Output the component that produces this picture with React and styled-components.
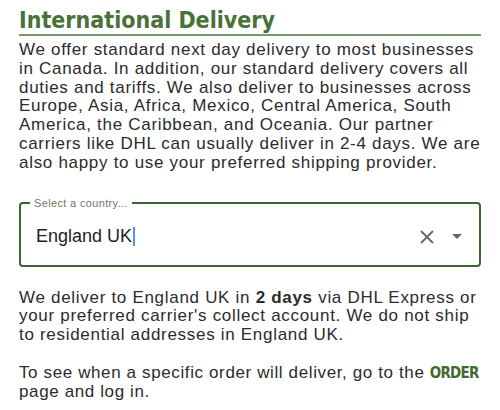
import styled, { createGlobalStyle } from 'styled-components';

const GlobalStyle = createGlobalStyle`
  body {
    margin: 0;
    background: #fff;
    font-family: "Liberation Sans", Arial, sans-serif;
  }
`;

const Page = styled.div`
  padding: 6px 19px 0;
`;

const Heading = styled.h2`
  margin: 0;
  padding-bottom: 0;
  border-bottom: 2px solid #7d9471;
  font-family: "DejaVu Sans Condensed", "DejaVu Sans", sans-serif;
  font-weight: 600;
  font-size: 23px;
  line-height: 28px;
  color: #4a7139;
`;

const Text = styled.p`
  margin: ${({ $top }) => $top || 0}px 0 0;
  font-size: 17px;
  line-height: 18.8px;
  letter-spacing: ${({ $track }) => $track || 0.7}px;
  color: #2b2b2b;
`;

const Strong = styled.b`
  font-weight: 700;
`;

const OrderLink = styled.a`
  font-family: "DejaVu Sans Condensed", sans-serif;
  font-weight: 700;
  font-size: 15px;
  letter-spacing: -0.8px;
  color: #3f6a30;
  text-decoration: none;
`;

const Field = styled.fieldset`
  margin: 24px 0 0;
  padding: 0 17px 0 15px;
  height: 70px;
  border: 2px solid #3b6633;
  border-radius: 4px;
  display: flex;
  align-items: center;
  box-sizing: border-box;
`;

const Legend = styled.legend`
  padding: 0 4px;
  margin-left: -6px;
  font-size: 11px;
  line-height: 12px;
  letter-spacing: 0.35px;
  color: #6c7a65;
`;

const Value = styled.div`
  flex: 1;
  display: flex;
  align-items: center;
  font-size: 18px;
  color: #1e1e1e;
`;

const Caret = styled.span`
  display: inline-block;
  width: 2px;
  height: 19px;
  margin-left: 1px;
  background: #5b8ef0;
`;

const IconBtn = styled.span`
  display: flex;
  align-items: center;
  justify-content: center;
  margin-left: ${({ $gap }) => $gap || 0}px;
`;

export default function App() {
  return (
    <>
      <GlobalStyle />
      <Page>
        <Heading>International Delivery</Heading>
        <Text $top={5}>
          We offer standard next day delivery to most businesses in Canada. In addition, our
          standard delivery covers all duties and tariffs. We also deliver to businesses across
          Europe, Asia, Africa, Mexico, Central America, South America, the Caribbean, and
          Oceania. Our partner carriers like DHL can usually deliver in 2-4 days. We are also
          happy to use your preferred shipping provider.
        </Text>
        <Field>
          <Legend>Select a country...</Legend>
          <Value>
            England UK<Caret />
          </Value>
          <IconBtn>
            <svg width="14" height="14" viewBox="0 0 14 14">
              <path d="M1 1 L13 13 M13 1 L1 13" stroke="#666" strokeWidth="1.8" fill="none" />
            </svg>
          </IconBtn>
          <IconBtn $gap={18}>
            <svg width="10" height="5" viewBox="0 0 10 5">
              <path d="M0 0 H10 L5 5 Z" fill="#666" />
            </svg>
          </IconBtn>
        </Field>
        <Text $top={22}>
          We deliver to England UK in <Strong>2 days</Strong> via DHL Express or your preferred
          carrier's collect account. We do not ship to residential addresses in England UK.
        </Text>
        <Text $top={19} $track={0.62}>
          To see when a specific order will deliver, go to the <OrderLink href="#">ORDER</OrderLink>{' '}
          page and log in.
        </Text>
      </Page>
    </>
  );
}
